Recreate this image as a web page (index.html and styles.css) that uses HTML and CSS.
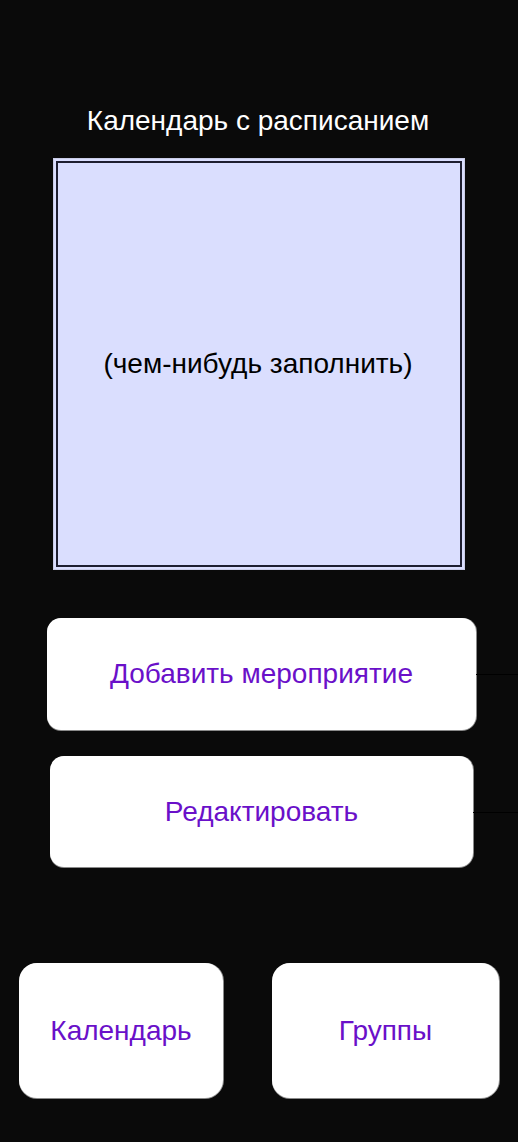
FILE: index.html
```html
<!DOCTYPE html>
<html lang="ru">
<head>
<meta charset="utf-8">
<title>Календарь с расписанием</title>
<link rel="stylesheet" href="styles.css">
</head>
<body>
<main class="page">
  <h1 class="title">Календарь с расписанием</h1>
  <section class="calendar">
    <div class="calendar-inner">(чем-нибудь заполнить)</div>
  </section>
  <div class="action-row action-row--add">
    <button class="btn btn--add">Добавить мероприятие</button>
    <span class="connector"></span>
  </div>
  <div class="action-row action-row--edit">
    <button class="btn btn--edit">Редактировать</button>
    <span class="connector"></span>
  </div>
  <nav class="tabs">
    <button class="btn tab tab--calendar">Календарь</button>
    <button class="btn tab tab--groups">Группы</button>
  </nav>
</main>
</body>
</html>
```

FILE: styles.css
```css
html, body {
  margin: 0;
  padding: 0;
  background: #0a0a0a;
}
body {
  font-family: "Liberation Sans", Arial, sans-serif;
  width: 518px;
  height: 1142px;
  overflow: hidden;
}
.page {
  display: flex;
  flex-direction: column;
}
.title {
  margin: 105px 0 0 0;
  height: 32px;
  line-height: 32px;
  font-size: 28px;
  font-weight: normal;
  color: #ffffff;
  text-align: center;
  padding-right: 2px;
}
.calendar {
  margin: 21px 0 0 53px;
  width: 412px;
  height: 412px;
  box-sizing: border-box;
  border: 1px solid #c9cbe6;
  background: #dadefe;
  padding: 2px;
}
.calendar-inner {
  box-sizing: border-box;
  height: 100%;
  border: 2px solid #1e1e30;
  display: flex;
  align-items: center;
  justify-content: center;
  font-size: 28px;
  color: #000;
  padding-right: 2px;
}
.action-row {
  display: flex;
  align-items: center;
}
.action-row--add {
  margin: 48px 0 0 47px;
}
.action-row--edit {
  margin: 26px 0 0 50px;
}
.connector {
  flex: 1;
  height: 1px;
  background: #000;
  margin-top: 1px;
}
.btn {
  box-sizing: border-box;
  background: #ffffff;
  border: none;
  box-shadow: 0 1px 0 #8a8a8a, 1px 0 0 #8a8a8a;
  color: #6a10c9;
  font-family: "Liberation Sans", Arial, sans-serif;
  font-size: 28px;
  padding: 0;
  display: flex;
  align-items: center;
  justify-content: center;
}
.btn--add {
  width: 429px;
  height: 112px;
  border-radius: 14px;
}
.btn--edit {
  width: 423px;
  height: 111px;
  border-radius: 14px;
}
.tabs {
  display: flex;
  margin: 96px 0 0 19px;
  gap: 49px;
}
.tab {
  height: 135px;
  border-radius: 18px;
}
.tab--calendar {
  width: 204px;
}
.tab--groups {
  width: 227px;
}
```
